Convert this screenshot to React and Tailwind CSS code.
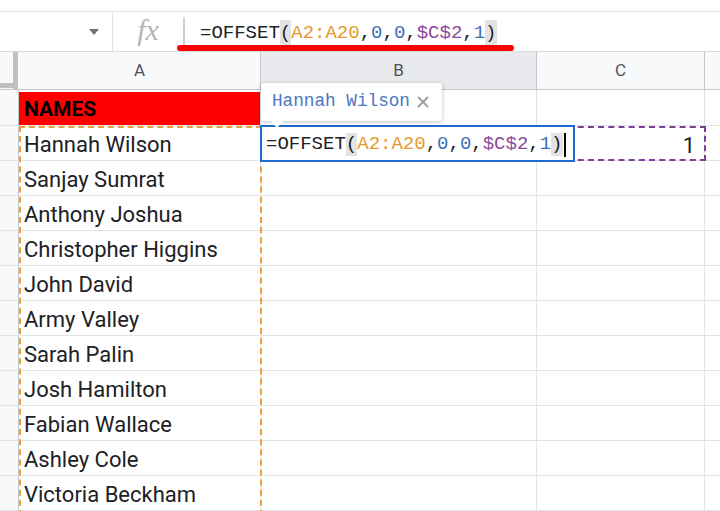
import React from "react";

const names = [
  "Hannah Wilson",
  "Sanjay Sumrat",
  "Anthony Joshua",
  "Christopher Higgins",
  "John David",
  "Army Valley",
  "Sarah Palin",
  "Josh Hamilton",
  "Fabian Wallace",
  "Ashley Cole",
  "Victoria Beckham",
];

const mono = { fontFamily: '"Liberation Mono", monospace' };

const Formula = () => (
  <>
    <span className="text-[#202124]">=OFFSET</span>
    <span className="bg-[#e3e3e3] text-[#202124] py-[2px]">(</span>
    <span className="text-[#e69a2c]">A2:A20</span>
    <span className="text-[#202124]">,</span>
    <span className="text-[#3b6fb6]">0</span>
    <span className="text-[#202124]">,</span>
    <span className="text-[#3b6fb6]">0</span>
    <span className="text-[#202124]">,</span>
    <span className="text-[#8a4a9e]">$C$2</span>
    <span className="text-[#202124]">,</span>
    <span className="text-[#3b6fb6]">1</span>
    <span className="bg-[#e3e3e3] text-[#202124] py-[2px]">)</span>
  </>
);

const Row = ({ children, height = "h-[35px]" }) => (
  <div className={`flex ${height} border-b border-[#e2e3e3]`}>
    <div className="w-[19px] shrink-0 bg-[#f8f9fa] border-r border-[#c4c7c5]" />
    <div className="w-[242px] shrink-0 border-r border-[#e2e3e3] flex items-center">
      {children}
    </div>
    <div className="w-[276px] shrink-0 border-r border-[#e2e3e3]" />
    <div className="w-[168px] shrink-0 border-r border-[#e2e3e3]" />
    <div className="flex-1" />
  </div>
);

export default function App() {
  return (
    <div
      className="relative w-[720px] h-[511px] overflow-hidden bg-white"
      style={{ fontFamily: "Roboto, Arial, sans-serif" }}
    >
      {/* top strip */}
      <div className="h-[12px] border-b border-[#e3e3e3]" />

      {/* formula bar */}
      <div className="flex h-[40px] border-b border-[#dcdcdc] items-center">
        <div className="w-[113px] h-full border-r border-[#e3e3e3] flex items-center justify-end pr-[13px]">
          <svg width="10" height="6" viewBox="0 0 10 6">
            <path d="M0 0h10L5 6z" fill="#757575" />
          </svg>
        </div>
        <div className="w-[70px] flex items-center justify-center">
          <span
            className="text-[30px] italic text-[#b5b5b5] leading-none -mt-1"
            style={{ fontFamily: '"Liberation Serif", serif' }}
          >
            fx
          </span>
        </div>
        <div className="w-[2px] h-[30px] bg-[#cfcfcf]" />
        <div className="pl-[15px] pt-[3px] text-[19px] leading-none" style={mono}>
          <Formula />
        </div>
      </div>

      {/* column headers */}
      <div className="flex h-[38px] border-b border-[#c4c7c5] bg-[#f8f9fa] text-[17px] text-[#4d5156]">
        <div className="w-[19px] shrink-0 relative">
          <div className="absolute right-[1px] top-0 w-[5px] h-[37px] bg-[#c0c0c0]" />
          <div className="absolute left-0 bottom-[1px] w-[18px] h-[5px] bg-[#c0c0c0]" />
        </div>
        <div className="w-[242px] shrink-0 border-r border-[#c4c7c5] flex items-center justify-center">
          A
        </div>
        <div className="w-[276px] shrink-0 border-r border-[#c4c7c5] bg-[#e8eaed] flex items-center justify-center">
          B
        </div>
        <div className="w-[168px] shrink-0 border-r border-[#c4c7c5] flex items-center justify-center">
          C
        </div>
        <div className="flex-1" />
      </div>

      {/* row 1 */}
      <Row height="h-[36px]">
        <div className="w-full h-[33px] mt-[1px] bg-[#ff0000] flex items-center pl-[5px] pt-[4px] text-[21px] font-bold text-black">
          NAMES
        </div>
      </Row>

      {names.map((n) => (
        <Row key={n}>
          <span className="pl-[5px] pt-[3px] text-[22px] text-[#202124]">{n}</span>
        </Row>
      ))}

      {/* red underline annotation */}
      <div className="absolute left-[177px] top-[45px] w-[337px] h-[6px] rounded-full bg-[#ff0000]" />

      {/* copy range A2:A20 */}
      <div className="absolute left-[19px] top-[126px] w-[243px] h-[400px] border-2 border-dashed border-[#eba13a]" />

      {/* referenced C2 */}
      <div className="absolute left-[537px] top-[126px] w-[169px] h-[35px] border-2 border-dashed border-[#7b3f9a] flex items-center justify-end pr-[9px] pt-[3px] text-[22px] text-[#202124]">
        1
      </div>

      {/* active editor */}
      <div className="absolute left-[260px] top-[125px] w-[315px] h-[37px] border-2 border-[#1d6ccd] bg-white flex items-center pl-[4px]">
        <div className="text-[19px] leading-none flex items-center pt-[2px]" style={mono}>
          <Formula />
          <span className="w-[2px] h-[24px] bg-black ml-[1px]" />
        </div>
      </div>

      {/* tooltip */}
      <div className="absolute left-[261px] top-[83px] w-[181px] h-[38px] bg-white rounded-[2px] shadow-[0_1px_4px_rgba(0,0,0,0.25)] flex items-center pl-[11px] gap-[7px]">
        <span className="text-[17.7px] text-[#4a78c0] leading-none" style={mono}>
          Hannah Wilson
        </span>
        <svg width="12" height="12" viewBox="0 0 12 12">
          <path d="M1 1L11 11M11 1L1 11" stroke="#9aa0a6" strokeWidth="2" />
        </svg>
        <div className="absolute left-[9px] bottom-[-7px] w-0 h-0 border-l-[7px] border-r-[7px] border-t-[8px] border-l-transparent border-r-transparent border-t-white" />
      </div>
    </div>
  );
}
